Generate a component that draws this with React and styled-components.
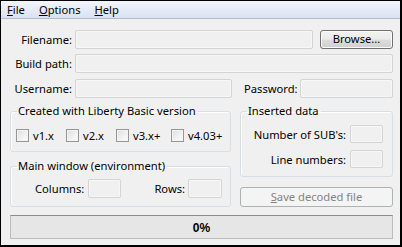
import React from 'react'
import styled, { createGlobalStyle } from 'styled-components'

const GlobalStyle = createGlobalStyle`
  html, body {
    margin: 0;
    padding: 0;
    background: #f0f0f0;
  }
  * {
    box-sizing: border-box;
  }
`

const Window = styled.div`
  width: 402px;
  height: 247px;
  display: flex;
  flex-direction: column;
  background: #f0f0f0;
  border-style: solid;
  border-color: #000;
  border-width: 1px 2px 2px 1px;
  font-family: 'Noto Sans', 'Open Sans', sans-serif;
  font-size: 11.2px;
  color: #000;
  overflow: hidden;
`

const MenuBar = styled.div`
  height: 18px;
  display: flex;
  align-items: center;
  padding-left: 6px;
  background: linear-gradient(#f3f6fc 0%, #e6ebf7 50%, #d9e1f2 100%);
  border-bottom: 1px solid #b6bcc6;
`

const MenuItem = styled.span`
  margin-right: 14px;
  line-height: 16px;

  u {
    text-decoration: underline;
    text-underline-offset: 1px;
  }
`

const Content = styled.div`
  flex: 1;
  display: flex;
  flex-direction: column;
  padding: 10px 7px 0 9px;
`

const Row = styled.div`
  display: flex;
  align-items: center;
  height: 20px;
  margin-top: ${(props) => props.top ?? 0}px;
`

const Label = styled.label`
  width: ${(props) => (props.width ? `${props.width}px` : 'auto')};
  text-align: right;
  margin-right: ${(props) => props.gap ?? 3}px;
  margin-left: ${(props) => props.left ?? 0}px;
  white-space: nowrap;
`

const TextBox = styled.div`
  height: ${(props) => props.height ?? 19}px;
  flex: ${(props) => (props.width ? 'none' : 1)};
  width: ${(props) => (props.width ? `${props.width}px` : 'auto')};
  border: 1px solid #d4d4d4;
  border-radius: 2px;
  background: #f0f0f0;
  box-shadow: inset 0 0 0 1px #f7f7f7;
`

const Button = styled.button`
  font-family: inherit;
  font-size: inherit;
  height: ${(props) => props.height ?? 19}px;
  width: ${(props) => (props.width ? `${props.width}px` : '100%')};
  margin-left: ${(props) => props.left ?? 0}px;
  padding: 0 0 1px;
  border: 1px solid #707070;
  border-radius: 3px;
  color: #000;
  background: linear-gradient(#f2f2f2 0%, #ebebeb 48%, #dddddd 52%, #cfcfcf 100%);
  box-shadow: inset 0 0 0 1px #fbfbfb;
  line-height: 16px;

  &:disabled {
    border-color: #adb2b5;
    background: #f4f4f4;
    box-shadow: none;
    color: #838383;
  }
`

const Bottom = styled.div`
  display: grid;
  grid-template-columns: 221px 1fr;
  column-gap: 9px;
  margin-top: 5px;
`

const Column = styled.div`
  display: flex;
  flex-direction: column;
  justify-content: space-between;
`

const Group = styled.fieldset`
  margin: 0 0 ${(props) => props.bottom ?? 0}px;
  padding: ${(props) => props.pad ?? '8px 0'};
  min-width: 0;
  border: 1px solid #d5dfe5;
  border-radius: 3px;
  box-shadow: inset 1px 1px 0 #fff;
`

const Legend = styled.legend`
  margin-left: 6px;
  padding: 0 2px 0 1px;
  line-height: 16px;
`

const Checks = styled.div`
  display: flex;
  align-items: center;
  height: 16px;
  padding-left: 5px;
`

const CheckItem = styled.label`
  display: flex;
  align-items: center;
  gap: 4px;
  width: ${(props) => props.width}px;
  flex: none;
`

const CheckBox = styled.span`
  width: 13px;
  height: 13px;
  flex: none;
  border: 1px solid #969696;
  background: linear-gradient(135deg, #dedede 0%, #f2f2f2 60%, #fdfdfd 100%);
  box-shadow: inset 0 0 0 1px #f4f4f4;
`

const SizeRow = styled.div`
  display: flex;
  align-items: center;
  height: 19px;
  padding-left: 24px;
`

const DataGrid = styled.div`
  display: grid;
  grid-template-columns: 1fr 33px;
  row-gap: 7px;
  align-items: center;
  justify-items: end;
  padding-right: 9px;
`

const Progress = styled.div`
  margin-top: 8px;
  height: 24px;
  display: flex;
  align-items: center;
  justify-content: center;
  border: 1px solid #bcbcbc;
  border-top-color: #8c8c8c;
  background: #e6e6e6;
  font-family: 'Liberation Sans', Arial, sans-serif;
  font-weight: bold;
  font-size: 12px;
  padding-top: 1px;
`

const versions = [
  { name: 'v1.x', width: 50 },
  { name: 'v2.x', width: 50 },
  { name: 'v3.x+', width: 55 },
  { name: 'v4.03+', width: 50 },
]

export default function App() {
  return (
    <>
      <GlobalStyle />
      <Window>
        <MenuBar>
          <MenuItem>
            <u>F</u>ile
          </MenuItem>
          <MenuItem>
            <u>O</u>ptions
          </MenuItem>
          <MenuItem>
            <u>H</u>elp
          </MenuItem>
        </MenuBar>
        <Content>
          <Row>
            <Label width={62}>Filename:</Label>
            <TextBox />
            <Button width={73} left={7}>
              Browse...
            </Button>
          </Row>
          <Row top={4}>
            <Label width={62}>Build path:</Label>
            <TextBox />
          </Row>
          <Row top={5}>
            <Label width={62}>Username:</Label>
            <TextBox width={157} />
            <Label left={12} gap={2}>
              Password:
            </Label>
            <TextBox />
          </Row>
          <Bottom>
            <Column>
              <Group bottom={6}>
                <Legend>Created with Liberty Basic version</Legend>
                <Checks>
                  {versions.map((v) => (
                    <CheckItem key={v.name} width={v.width}>
                      <CheckBox />
                      {v.name}
                    </CheckItem>
                  ))}
                </Checks>
              </Group>
              <Group pad='5px 0 8px'>
                <Legend>Main window (environment)</Legend>
                <SizeRow>
                  <Label gap={4}>Columns:</Label>
                  <TextBox width={33} />
                  <Label left={33} gap={3}>
                    Rows:
                  </Label>
                  <TextBox width={34} />
                </SizeRow>
              </Group>
            </Column>
            <Column>
              <Group pad='6px 0 8px'>
                <Legend>Inserted data</Legend>
                <DataGrid>
                  <Label gap={4}>Number of SUB's:</Label>
                  <TextBox width={33} height={18} />
                  <Label gap={4}>Line numbers:</Label>
                  <TextBox width={33} height={18} />
                </DataGrid>
              </Group>
              <Button height={20} disabled>
                <u>S</u>ave decoded file
              </Button>
            </Column>
          </Bottom>
          <Progress>0%</Progress>
        </Content>
      </Window>
    </>
  )
}
